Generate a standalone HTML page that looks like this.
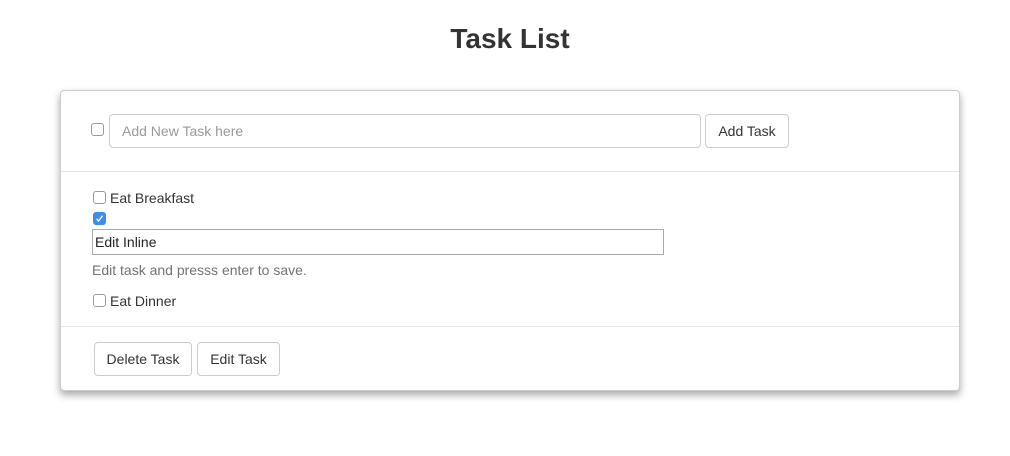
<!DOCTYPE html>
<html><head><style>
*{box-sizing:border-box;margin:0;padding:0}
body{width:1010px;height:456px;background:#fff;font-family:"Liberation Sans",sans-serif;color:#333;position:relative;overflow:hidden}
h1{position:absolute;top:23px;left:5px;width:1010px;text-align:center;font-size:28px;font-weight:bold;color:#333}
.card{position:absolute;left:60px;top:90px;width:900px;height:301px;border:1px solid #ccc;border-radius:4px;box-shadow:0 4px 8px rgba(0,0,0,.35);background:#fff}
.abs{position:absolute}
.cb{position:absolute;width:13px;height:13px;border:1px solid #999;border-radius:3px;background:#fff}
.btn{position:absolute;border:1px solid #ccc;border-radius:4px;background:#fff;font-size:14px;color:#333;text-align:center}
.hr{position:absolute;left:0;width:898px;height:1px;background:#e5e5e5}
.t{position:absolute;font-size:14px;color:#333}
</style></head><body>
<h1>Task List</h1>
<div class="card">
  <div class="cb" style="left:30px;top:32px"></div>
  <div class="abs" style="left:48px;top:23px;width:592px;height:34px;border:1px solid #ccc;border-radius:4px;font-size:14px;color:#999;padding:8px 12px">Add New Task here</div>
  <div class="btn" style="left:644px;top:23px;width:84px;height:34px;line-height:32px">Add Task</div>
  <div class="hr" style="top:80px"></div>
  <div class="cb" style="left:32px;top:100px"></div>
  <div class="t" style="left:49px;top:99px">Eat Breakfast</div>
  <div class="cb" style="left:32px;top:121px;background:#3b8ef0;border-color:#3b8ef0"><svg width="11" height="11" viewBox="0 0 11 11" style="position:absolute;left:0;top:0"><path d="M2.5 5.8 L4.5 8 L8.5 2.8" stroke="#fff" stroke-width="1.4" fill="none"/></svg></div>
  <div class="abs" style="left:31px;top:138px;width:572px;height:26px;border:1px solid #aaa;font-size:14px;color:#222;padding:4px 2px">Edit Inline</div>
  <div class="t" style="left:31px;top:171px;color:#737373">Edit task and presss enter to save.</div>
  <div class="cb" style="left:32px;top:203px"></div>
  <div class="t" style="left:49px;top:202px">Eat Dinner</div>
  <div class="hr" style="top:235px"></div>
  <div class="btn" style="left:33px;top:251px;width:98px;height:34px;line-height:32px">Delete Task</div>
  <div class="btn" style="left:136px;top:251px;width:83px;height:34px;line-height:32px">Edit Task</div>
</div>
</body></html>
